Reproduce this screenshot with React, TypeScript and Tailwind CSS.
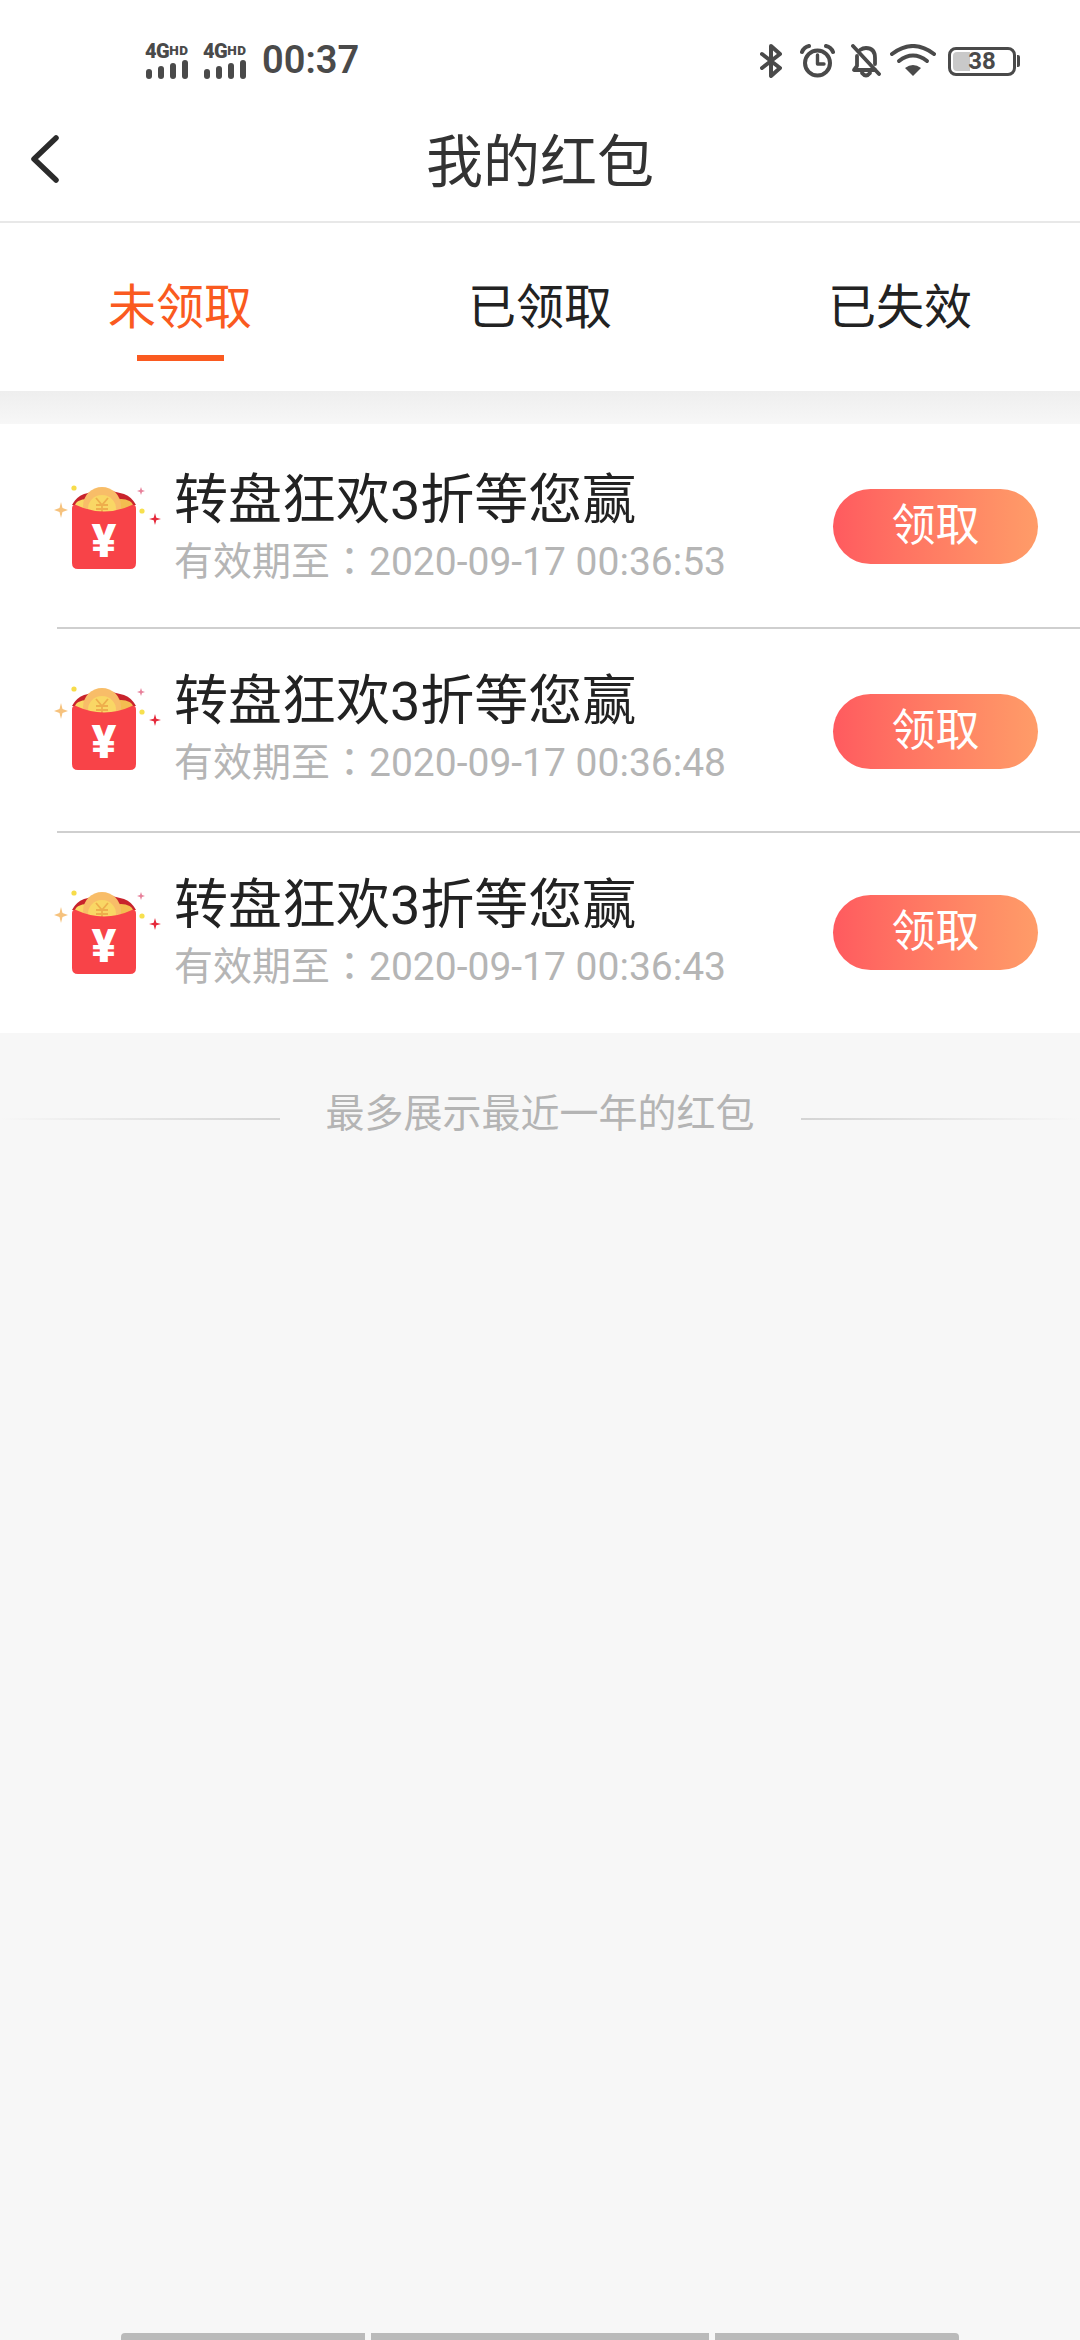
import { useState } from 'react';

const FONT = "font-['Roboto','Noto_Sans_CJK_SC',sans-serif]";

// One "4G HD" block of the status bar: label over four signal bars.
function Signal() {
  return (
    <div className="flex w-[45px] flex-col">
      <div className="flex h-[15px] items-baseline font-black leading-[15px] text-[#4a4a4a]">
        <span className="text-[20px] tracking-[-0.5px]">4G</span>
        <span className="relative top-[-3px] text-[13.5px] tracking-[0.6px]">HD</span>
      </div>
      <div className="mt-[1px] flex h-[19px] items-end gap-[6px] pl-[1px]">
        <div className="h-[10px] w-[6px] rounded-full bg-[#4a4a4a]" />
        <div className="h-[13px] w-[6px] rounded-full bg-[#4a4a4a]" />
        <div className="h-[16px] w-[6px] rounded-full bg-[#4a4a4a]" />
        <div className="h-[19px] w-[6px] rounded-full bg-[#4a4a4a]" />
      </div>
    </div>
  );
}

function StatusIcons() {
  return (
    <div className="mb-[1px] flex items-center">
      <svg width="22" height="34" viewBox="0 0 22 34" fill="none" stroke="#4a4a4a" strokeWidth="4" strokeLinecap="round" strokeLinejoin="round">
        <path d="M2 10 L20 24 L11 32 V2 L20 10 L2 24" />
      </svg>
      <svg className="ml-[18px]" width="35" height="34" viewBox="0 0 35 34" fill="none" stroke="#4a4a4a" strokeWidth="4" strokeLinecap="round" strokeLinejoin="round">
        <circle cx="17.5" cy="19" r="12.5" />
        <path d="M17.5 11 V20 H24" strokeWidth="3.4" />
        <path d="M2 8 Q4 3 9 2" />
        <path d="M33 8 Q31 3 26 2" />
      </svg>
      <svg className="ml-[16px]" width="30" height="34" viewBox="0 0 30 34" fill="none" stroke="#4a4a4a" strokeWidth="3.8" strokeLinecap="round" strokeLinejoin="round">
        <path d="M6 12 V22 L3 26 H24" />
        <path d="M9 6 Q12 4 15 4 Q24 4 24 14 V20" />
        <path d="M11 29 Q15 34 19 29" />
        <path d="M2 2 L28 30" />
      </svg>
      <svg className="ml-[9px]" width="46" height="34" viewBox="0 0 46 34" fill="none">
        <path d="M2 10 Q23 -6 44 10" stroke="#4a4a4a" strokeWidth="4" strokeLinecap="round" />
        <path d="M9 17 Q23 6 37 17" stroke="#4a4a4a" strokeWidth="4" strokeLinecap="round" />
        <path d="M15 24 Q23 18 31 24 L23 32 Z" fill="#4a4a4a" />
      </svg>
      <div className="ml-[12px] flex items-center">
        <div className="relative flex h-[29px] w-[68px] items-center rounded-[8px] border-[3px] border-[#4a4a4a] p-[2px]">
          <div className="h-full w-[17px] rounded-l-[4px] bg-[#c9c9c9]" />
          <span className="absolute inset-0 text-center text-[24px] font-bold leading-[23px] text-[#4a4a4a]">38</span>
        </div>
        <div className="ml-[1px] h-[12px] w-[3px] rounded-r-[2px] bg-[#4a4a4a]" />
      </div>
    </div>
  );
}

function RedPacket() {
  return (
    <svg width="130" height="120" viewBox="0 0 130 120" className="mt-[32px] shrink-0">
      <circle cx="34" cy="28" r="2.6" fill="#f7dc4a" />
      <path d="M21 42 L22.5 48 L28 50 L22.5 52 L21 58 L19.5 52 L14 50 L19.5 48 Z" fill="#f6c27d" />
      <path d="M101 27 L102 30 L105 31 L102 32 L101 35 L100 32 L97 31 L100 30 Z" fill="#e7809a" />
      <circle cx="102" cy="51" r="2.6" fill="#f7e04e" />
      <path d="M115 53 L116.3 57.7 L121 59 L116.3 60.3 L115 65 L113.7 60.3 L109 59 L113.7 57.7 Z" fill="#e5283a" />
      <path d="M32 45 Q36 37 44 34 Q64 27 84 34 Q92 37 96 45 Z" fill="#c8232c" />
      <ellipse cx="47" cy="46" rx="12" ry="7" fill="#f9d765" />
      <ellipse cx="81" cy="46" rx="12" ry="7" fill="#f3bd50" />
      <circle cx="62" cy="46" r="19" fill="#f8bd68" />
      <circle cx="62" cy="49" r="14" fill="#f9d765" />
      {/* coin mark */}
      <path d="M56 38 L62 45 L68 38 M62 45 V54 M56 45 H68 M56 49 H68" fill="none" stroke="#eeae4c" strokeWidth="1.8" />
      <path d="M32 49 Q32 44 36 45 Q64 58 92 45 Q96 44 96 49 V103 Q96 109 90 109 H38 Q32 109 32 103 Z" fill="#f84348" />
      <text x="64" y="97" textAnchor="middle" fontSize="46" fontWeight="900" fill="#fff" fontFamily="Roboto">¥</text>
    </svg>
  );
}

// The rows of the list aren't evenly spaced in the app, hence the per-row tweaks.
function PacketRow({
  expires,
  rowClass,
  buttonClass,
  divider,
}: {
  expires: string;
  rowClass: string;
  buttonClass: string;
  divider: boolean;
}) {
  return (
    <div className={`relative flex items-start pl-[40px] pr-[42px] ${rowClass}`}>
      <RedPacket />
      <div className="mt-[42px] ml-[4px] flex min-w-0 flex-1 flex-col">
        <div className="text-[54px] leading-[62px] text-[#222]">转盘狂欢3折等您赢</div>
        <div className="text-[39px] leading-[52px] text-[#b5b5b5]">
          有效期至<span className="font-['Noto_Sans_CJK_TC',sans-serif]">：</span>
          {expires}
        </div>
      </div>
      <button className={`h-[75px] w-[205px] shrink-0 rounded-full bg-gradient-to-r from-[#ff5a5f] to-[#ff9c68] text-[44px] leading-[75px] text-white ${buttonClass}`}>
        领取
      </button>
      {divider && <div className="absolute right-0 bottom-0 left-[57px] h-[2px] bg-[#cfcfcf]" />}
    </div>
  );
}

const TABS = ['未领取', '已领取', '已失效'];

export default function App() {
  const [tab, setTab] = useState(0);

  return (
    <div className={`flex h-[2340px] w-[1080px] flex-col overflow-hidden bg-[#f7f7f7] ${FONT}`}>
      <div className="bg-white">
        {/* status bar */}
        <div className="flex h-[79px] items-end justify-between pr-[60px] pl-[145px]">
          <div className="flex items-end">
            <Signal />
            <div className="ml-[13px]">
              <Signal />
            </div>
            <span className="ml-[14px] text-[38px] leading-[37px] font-semibold text-[#4a4a4a]">00:37</span>
          </div>
          <StatusIcons />
        </div>

        {/* title bar */}
        <div className="relative flex h-[144px] items-center justify-center border-b-2 border-[#e8e8e8] pt-[26px]">
          <button className="absolute top-[54px] left-[29px]">
            <svg width="32" height="52" viewBox="0 0 32 52" fill="none" stroke="#2b2b2b" strokeWidth="5.5" strokeLinecap="round" strokeLinejoin="round">
              <path d="M27 5 L5 26 L27 47" />
            </svg>
          </button>
          <h1 className="text-[57px] leading-[70px] font-normal text-[#333]">我的红包</h1>
        </div>

        {/* tabs */}
        <div className="grid h-[168px] grid-cols-3">
          {TABS.map((t, i) => (
            <button key={t} onClick={() => setTab(i)} className="flex flex-col items-center">
              <span className={`mt-[55px] text-[48px] leading-[60px] ${tab === i ? 'text-[#fa5a20]' : 'text-[#222]'}`}>{t}</span>
              {tab === i && <span className="mt-[17px] h-[6px] w-[87px] bg-[#fa5a20]" />}
            </button>
          ))}
        </div>
      </div>

      <div className="h-[33px] bg-gradient-to-b from-[#eeeeee] to-[#f7f7f7]" />

      <div className="bg-white">
        <PacketRow expires="2020-09-17 00:36:53" rowClass="h-[205px] pt-[4px]" buttonClass="mt-[61px]" divider />
        <PacketRow expires="2020-09-17 00:36:48" rowClass="h-[204px]" buttonClass="mt-[65px]" divider />
        <PacketRow expires="2020-09-17 00:36:43" rowClass="h-[200px]" buttonClass="mt-[62px]" divider={false} />
      </div>

      <div className="mt-[59px] flex items-center">
        <div className="mt-[10px] h-[2px] flex-1 bg-gradient-to-r from-transparent to-[#d4d4d4]" />
        <span className="px-[46px] text-[39px] leading-[44px] text-[#b4b4b4]">最多展示最近一年的红包</span>
        <div className="mt-[10px] h-[2px] flex-1 bg-gradient-to-l from-transparent to-[#d4d4d4]" />
      </div>

      {/* nav gesture bars */}
      <div className="mt-auto flex justify-center gap-[6px]">
        <div className="h-[7px] w-[244px] rounded-tl-[4px] bg-[#bababa]" />
        <div className="h-[7px] w-[338px] bg-[#bababa]" />
        <div className="h-[7px] w-[244px] rounded-tr-[4px] bg-[#bababa]" />
      </div>
    </div>
  );
}
